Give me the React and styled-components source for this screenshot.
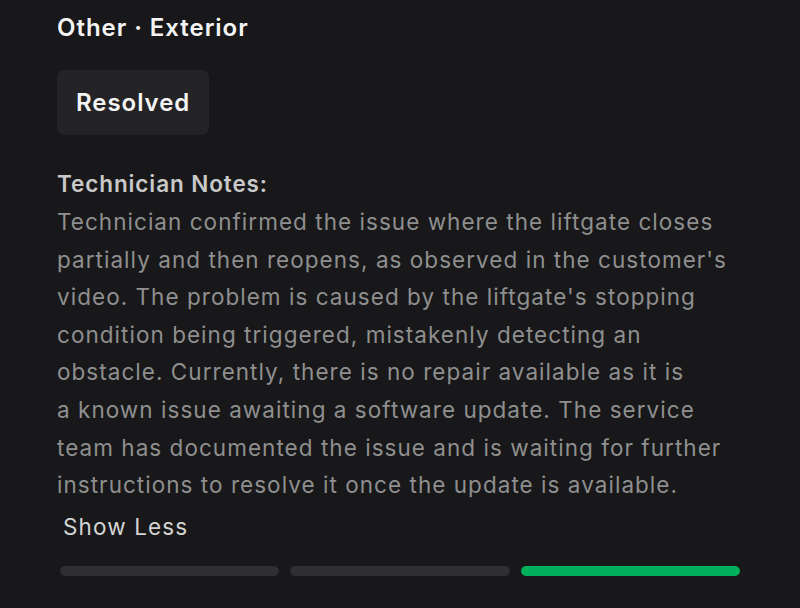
import React, { useState } from 'react';
import styled, { createGlobalStyle } from 'styled-components';

const GlobalStyle = createGlobalStyle`
  html, body {
    margin: 0;
    padding: 0;
    background: #18181a;
  }
  body {
    font-family: Inter, "Noto Sans", sans-serif;
    -webkit-font-smoothing: antialiased;
  }
`;

const Page = styled.div`
  width: 800px;
  height: 608px;
  box-sizing: border-box;
  padding: 11px 57px 0 57px;
  background: #18181a;
  display: flex;
  flex-direction: column;
  overflow: hidden;
`;

const Title = styled.h1`
  margin: 0;
  font-size: 24px;
  line-height: 34px;
  font-weight: 600;
  letter-spacing: 0.04em;
  color: #f4f4f4;
`;

const StatusBadge = styled.div`
  align-self: flex-start;
  margin-top: 25px;
  width: 152px;
  height: 65px;
  box-sizing: border-box;
  padding-left: 19px;
  display: flex;
  align-items: center;
  border-radius: 8px;
  background: #242426;
  color: #f4f4f4;
  font-size: 24px;
  font-weight: 600;
  letter-spacing: 0.04em;
`;

const NotesLabel = styled.div`
  margin-top: 30px;
  font-size: 22.5px;
  line-height: 38px;
  font-weight: 600;
  letter-spacing: 0.04em;
  color: #c9c9c9;
`;

const NotesText = styled.p`
  margin: 0;
  font-size: 22.5px;
  line-height: 37.6px;
  font-weight: 400;
  letter-spacing: 0.046em;
  color: #8f8f8f;
  max-width: 686px;
`;

const ToggleButton = styled.button`
  align-self: flex-start;
  margin: 5px 0 0 6px;
  padding: 0;
  border: none;
  background: none;
  font-family: inherit;
  font-size: 22.5px;
  line-height: 36px;
  letter-spacing: 0.05em;
  color: #d4d4d4;
  cursor: pointer;
`;

const Progress = styled.div`
  margin-top: 21px;
  margin-left: 3px;
  width: 680px;
  display: grid;
  grid-template-columns: repeat(3, 1fr);
  gap: 11px;
`;

const Segment = styled.div`
  height: 10px;
  border-radius: 5px;
  background: ${(p) => (p.$active ? '#00b05b' : '#2f2f31')};
`;

export default function App() {
  const [expanded, setExpanded] = useState(true);
  const steps = [false, false, true];

  return (
    <Page>
      <GlobalStyle />
      <Title>Other · Exterior</Title>
      <StatusBadge>Resolved</StatusBadge>
      <NotesLabel>Technician Notes:</NotesLabel>
      <NotesText>
        Technician confirmed the issue where the liftgate closes partially and then reopens, as observed in the customer's video. The problem is caused by the liftgate's stopping condition being triggered, mistakenly detecting an obstacle. Currently, there is no repair available as it is
        <br />
        a known issue awaiting a software update. The service team has documented the issue and is waiting for further instructions to resolve it once the update is available.
      </NotesText>
      <ToggleButton onClick={() => setExpanded(!expanded)}>
        {expanded ? 'Show Less' : 'Show More'}
      </ToggleButton>
      <Progress>
        {steps.map((a, i) => (
          <Segment key={i} $active={a} />
        ))}
      </Progress>
    </Page>
  );
}
